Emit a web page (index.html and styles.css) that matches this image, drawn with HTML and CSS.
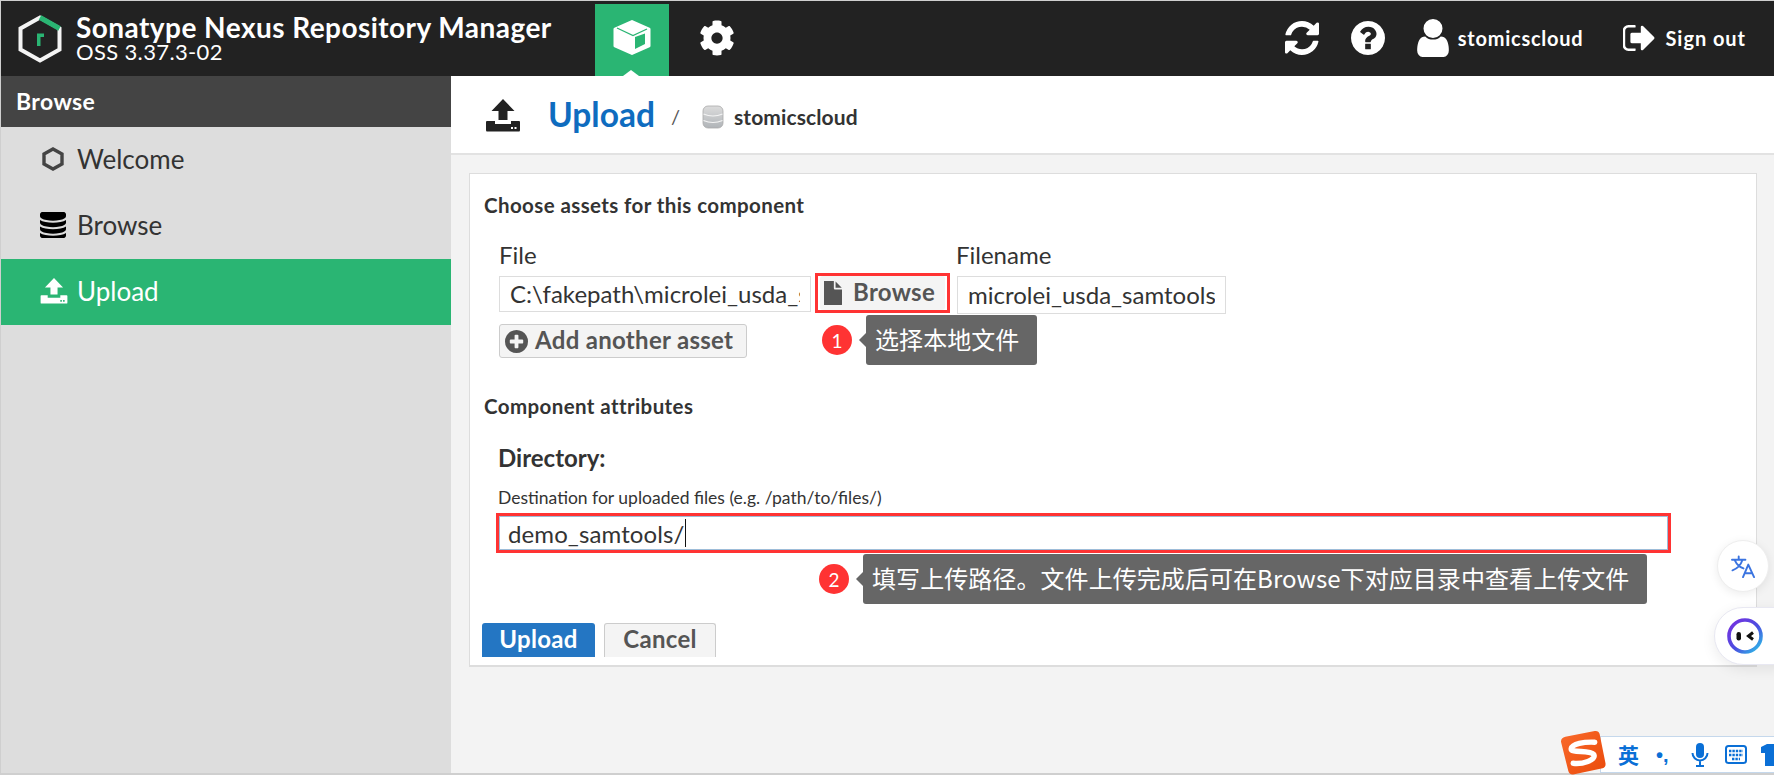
FILE: index.html
```html
<!DOCTYPE html>
<html lang="en">
<head>
<meta charset="utf-8">
<title>Sonatype Nexus Repository Manager</title>
<link rel="stylesheet" href="styles.css">
</head>
<body>
<div class="app">
  <header class="topbar">
    <div class="brand">
      <svg class="logo" viewBox="0 0 44 48"><path d="M22 2.500 L41.500 13.500 V34.500 L22 45.500 L2.500 34.500 V13.500 Z" fill="none" stroke="#f4f4f4" stroke-width="4"/><path d="M22 2.500 L41.500 13.500" fill="none" stroke="#2ab573" stroke-width="5"/><path d="M19 31 V18.500 H26 V22 H22.500 V31 Z" fill="#2ab573"/></svg>
      <div class="brand-text">
        <div class="brand-name">Sonatype Nexus Repository Manager</div>
        <div class="brand-version">OSS 3.37.3-02</div>
      </div>
    </div>
    <nav class="modes">
      <div class="mode mode-active">
        <svg class="cube" viewBox="0 0 38 35"><path d="M19 1.500 L36 9 V26 L19 33.500 L2 26 V9 Z" fill="#fff" stroke="#fff" stroke-width="3" stroke-linejoin="round"/><path d="M4 8 L20 15.500 L34 9" fill="none" stroke="#2ab573" stroke-width="1.300"/><path d="M22 17 L32 13.500 V24 L22 29 Z" fill="#2ab573"/></svg>
      </div>
      <div class="mode">
        <svg class="gear" viewBox="0 0 512 512"><path fill="#fff" d="M487.400 315.700l-42.600-24.600c4.300-23.200 4.300-47 0-70.200l42.600-24.600c4.900-2.800 7.100-8.600 5.500-14-11.100-35.600-30-67.800-54.700-94.600-3.800-4.100-10-5.100-14.800-2.300L380.800 110c-17.900-15.400-38.500-27.300-60.800-35.100V25.800c0-5.600-3.900-10.500-9.400-11.700-36.700-8.200-74.300-7.800-109.200 0-5.500 1.200-9.400 6.100-9.400 11.700V75c-22.200 7.900-42.800 19.800-60.800 35.100L88.700 85.500c-4.900-2.800-11-1.900-14.800 2.300-24.700 26.700-43.600 58.900-54.700 94.600-1.700 5.400.6 11.200 5.500 14L67.300 221c-4.300 23.200-4.300 47 0 70.200l-42.600 24.600c-4.900 2.800-7.100 8.600-5.500 14 11.100 35.600 30 67.800 54.700 94.600 3.800 4.100 10 5.100 14.800 2.300l42.600-24.600c17.900 15.400 38.500 27.300 60.800 35.100v49.200c0 5.600 3.900 10.500 9.400 11.700 36.700 8.200 74.300 7.800 109.200 0 5.500-1.200 9.400-6.100 9.400-11.700v-49.200c22.200-7.900 42.800-19.800 60.800-35.100l42.600 24.600c4.900 2.800 11 1.900 14.800-2.300 24.700-26.700 43.600-58.900 54.700-94.600 1.500-5.500-.7-11.300-5.600-14.100zM256 336c-44.100 0-80-35.900-80-80s35.900-80 80-80 80 35.900 80 80-35.900 80-80 80z"/></svg>
      </div>
    </nav>
    <div class="actions">
      <svg class="act-icon refresh" viewBox="128 128 1536 1536"><path fill="#fff" d="M1639 1056q0 5-1 7-64 268-268 434.500t-478 166.500q-146 0-282.500-55t-243.500-157l-129 129q-19 19-45 19t-45-19-19-45v-448q0-26 19-45t45-19h448q26 0 45 19t19 45-19 45l-137 137q71 66 161 102t187 36q134 0 250-65t186-179q11-17 53-117 8-23 30-23h192q13 0 22.500 9.500t9.500 22.500zm25-800v448q0 26-19 45t-45 19h-448q-26 0-45-19t-19-45 19-45l138-138q-148-137-349-137-134 0-250 65t-186 179q-11 17-53 117-8 23-30 23h-199q-13 0-22.500-9.500t-9.500-22.500v-7q65-268 270-434.500t480-166.500q146 0 284 55.500t245 156.500l130-129q19-19 45-19t45 19 19 45z"/></svg>
      <svg class="act-icon help" viewBox="128 128 1536 1536"><path fill="#fff" d="M1024 1376v-192q0-14-9-23t-23-9h-192q-14 0-23 9t-9 23v192q0 14 9 23t23 9h192q14 0 23-9t9-23zm256-672q0-88-55.500-163t-138.500-116-170-41q-243 0-371 213-15 24 8 42l132 100q7 6 19 6 16 0 25-12 53-68 86-92 34-24 86-24 48 0 85.500 26t37.500 59q0 38-20 61t-68 45q-63 28-115.500 86.500t-52.500 125.500v36q0 14 9 23t23 9h192q14 0 23-9t9-23q0-19 21.500-49.500t54.500-49.500q32-18 49-28.500t46-35 44.500-48 28-60.500 12.500-81zm384 192q0 209-103 385.500t-279.500 279.500-385.500 103-385.500-103-279.500-279.500-103-385.500 103-385.500 279.500-279.500 385.500-103 385.500 103 279.500 279.500 103 385.500z"/></svg>
      <div class="user">
        <svg class="user-icon" viewBox="256 128 1280 1536"><path fill="#fff" d="M1536 1399q0 109-62.500 187t-150.500 78h-854q-88 0-150.500-78t-62.500-187q0-85 8.500-160.500t31.500-152 58.500-131 94-89 134.500-34.500q131 128 313 128t313-128q76 0 134.500 34.500t94 89 58.500 131 31.500 152 8.500 160.500zm-256-887q0 159-112.500 271.500t-271.500 112.500-271.500-112.500-112.500-271.500 112.500-271.500 271.500-112.500 271.500 112.500 112.500 271.500z"/></svg>
        <span class="act-label">stomicscloud</span>
      </div>
      <div class="signout">
        <svg class="signout-icon" viewBox="128 256 1536 1280"><path fill="#fff" d="M704 1440q0 4 1 20t.500 26.500-3 23.500-10 19.500-20.500 6.500h-320q-119 0-203.500-84.500t-84.500-203.500v-704q0-119 84.500-203.500t203.500-84.500h320q13 0 22.500 9.500t9.500 22.500q0 4 1 20t.500 26.500-3 23.500-10 19.500-20.500 6.500h-320q-66 0-113 47t-47 113v704q0 66 47 113t113 47h312l11.500 1 11.500 3 8 5.500 7 9 2 13.500zm928-544q0 26-19 45l-544 544q-19 19-45 19t-45-19-19-45v-288h-448q-26 0-45-19t-19-45v-384q0-26 19-45t45-19h448v-288q0-26 19-45t45-19 45 19l544 544q19 19 19 45z"/></svg>
        <span class="act-label">Sign out</span>
      </div>
    </div>
  </header>
  <div class="main">
    <aside class="sidebar">
      <div class="side-head">Browse</div>
      <div class="side-item">
        <svg class="side-icon" viewBox="0 0 26 26"><path d="M13 3 L22 8 V18 L13 23 L4 18 V8 Z" fill="none" stroke="#444" stroke-width="3.400"/></svg>
        <span>Welcome</span>
      </div>
      <div class="side-item">
        <svg class="side-icon" viewBox="224 128 1344 1536"><path fill="#000" d="M896 768q237 0 443-43t325-127v170q0 69-103 128t-280 93.500-385 34.500-385-34.500-280-93.500-103-128v-170q119 84 325 127t443 43zm0 768q237 0 443-43t325-127v170q0 69-103 128t-280 93.500-385 34.500-385-34.500-280-93.500-103-128v-170q119 84 325 127t443 43zm0-384q237 0 443-43t325-127v170q0 69-103 128t-280 93.500-385 34.500-385-34.500-280-93.500-103-128v-170q119 84 325 127t443 43zm0-1152q208 0 385 34.500t280 93.500 103 128v128q0 69-103 128t-280 93.500-385 34.500-385-34.500-280-93.500-103-128v-128q0-69 103-128t280-93.500 385-34.500z"/></svg>
        <span>Browse</span>
      </div>
      <div class="side-item side-active">
        <svg class="side-icon side-upload" viewBox="0 0 34 33"><path fill="#fff" d="M17 0 L28.500 12 H21.500 V21 H12.500 V12 H5.500 Z M0 23 Q0 22 1 22 H9 V25 H25 V22 H33 Q34 22 34 23 V31 Q34 32.500 33 32.500 H1 Q0 32.500 0 31 Z"/><path fill="#2ab573" d="M25 28 h2 v2 h-2 Z M28.500 28 h2 v2 h-2 Z"/></svg>
        <span>Upload</span>
      </div>
    </aside>
    <main class="content">
      <div class="crumbs">
        <svg class="crumb-upload" viewBox="0 0 34 33"><path fill="#222" d="M17 0 L28.500 12 H21.500 V21 H12.500 V12 H5.500 Z M0 23 Q0 22 1 22 H9 V25 H25 V22 H33 Q34 22 34 23 V31 Q34 32.500 33 32.500 H1 Q0 32.500 0 31 Z"/><path fill="#fff" d="M25 28 h2 v2 h-2 Z M28.500 28 h2 v2 h-2 Z"/></svg>
        <span class="crumb-title">Upload</span>
        <span class="crumb-sep">/</span>
        <svg class="crumb-db" viewBox="0 0 22 24"><defs><linearGradient id="dbg" x1="0" x2="0" y1="0" y2="1"><stop offset="0" stop-color="#dcdcdc"/><stop offset="1" stop-color="#b0b4b8"/></linearGradient></defs><rect x="1" y="1" width="20" height="22" rx="5" fill="url(#dbg)" stroke="#aaa" stroke-width=".8"/><path d="M1.500 9 Q11 13 20.500 9 M1.500 15.500 Q11 19.500 20.500 15.500" fill="none" stroke="#f4f4f4" stroke-width="1.200"/></svg>
        <span class="crumb-repo">stomicscloud</span>
      </div>
      <div class="panel">
        <h3 class="section">Choose assets for this component</h3>
        <div class="asset-row">
          <div class="field file-field">
            <label class="lbl">File</label>
            <div class="input file-input"><span class="clip">C:\fakepath\microlei_usda_sa</span></div>
          </div>
          <div class="browse-wrap">
            <div class="btn browse-btn">
              <svg class="btn-icon file-icon" viewBox="256 0 1280 1792"><path fill="#555" d="M1152 512v-472q22 14 36 28l408 408q14 14 28 36h-472zm-128 32q0 40 28 68t68 28h544v1056q0 40-28 68t-68 28h-1344q-40 0-68-28t-28-68v-1600q0-40 28-68t68-28h800v544z" transform="translate(-64 0)"/></svg>
              <span>Browse</span>
            </div>
          </div>
          <div class="field name-field">
            <label class="lbl">Filename</label>
            <div class="input name-input"><span class="clip">microlei_usda_samtools</span></div>
          </div>
        </div>
        <div class="btn add-btn">
          <svg class="btn-icon plus-icon" viewBox="128 128 1536 1536"><path fill="#555" d="M1344 960v-128q0-26-19-45t-45-19h-256v-256q0-26-19-45t-45-19h-128q-26 0-45 19t-19 45v256h-256q-26 0-45 19t-19 45v128q0 26 19 45t45 19h256v256q0 26 19 45t45 19h128q26 0 45-19t19-45v-256h256q26 0 45-19t19-45zm320-64q0 209-103 385.500t-279.500 279.500-385.500 103-385.500-103-279.500-279.500-103-385.500 103-385.500 279.500-279.500 385.500-103 385.500 103 279.500 279.500 103 385.500z"/></svg>
          <span>Add another asset</span>
        </div>
        <h3 class="section section-2">Component attributes</h3>
        <div class="dir-title">Directory:</div>
        <div class="dir-help">Destination for uploaded files (e.g. /path/to/files/)</div>
        <div class="dir-input"><span class="dir-value">demo_samtools/</span><i class="text-caret"></i></div>
        <div class="form-actions">
          <div class="btn primary">Upload</div>
          <div class="btn cancel">Cancel</div>
        </div>
        <div class="note note-1"><b class="num">1</b><i class="tip-arrow"></i><span class="tip">选择本地文件</span></div>
        <div class="note note-2"><b class="num">2</b><i class="tip-arrow"></i><span class="tip">填写上传路径。文件上传完成后可在Browse下对应目录中查看上传文件</span></div>
      </div>
    </main>
  </div>
</div>
<div class="float-translate">
  <svg viewBox="0 0 26 24" class="float-t-icon"><g fill="none" stroke="#3b74e0" stroke-width="2" stroke-linecap="round" stroke-linejoin="round"><path d="M1 5 H15 M8 1.500 V5 M12 5 C10 11 6 14.500 1.500 16 M4 5.500 C6 10 9 12.500 13 14"/><path d="M12.500 23 L18 10 L24 23 M14.500 19 H22"/></g></svg>
</div>
<div class="float-assist">
  <svg viewBox="0 0 36 36" class="float-a-icon"><defs><linearGradient id="ring" x1="0" y1="0" x2="1" y2="1"><stop offset="0" stop-color="#7a2ee0"/><stop offset=".55" stop-color="#4a4fe0"/><stop offset="1" stop-color="#29c8e8"/></linearGradient></defs><circle cx="18" cy="18" r="16" fill="#fff" stroke="url(#ring)" stroke-width="3.600"/><rect x="9.500" y="14" width="4.500" height="8.500" rx="2.200" fill="#111"/><path d="M26 14.500 L21.500 18 L26 21.500" fill="none" stroke="#111" stroke-width="3"/></svg>
</div>
<div class="ime">
  <svg class="ime-logo" viewBox="0 0 46 46"><defs><linearGradient id="sg" x1="0" y1="0" x2="1" y2="1"><stop offset="0" stop-color="#f96a2c"/><stop offset="1" stop-color="#ea4a0a"/></linearGradient></defs><path d="M5 7 L35 1 Q39 0.500 40 4 L46 34 Q46.500 38 43 39 L13 45.500 Q9 46 8 42 L0.500 12 Q0.500 8 5 7 Z" fill="url(#sg)"/><path d="M35 12.500 C24 12 12 14 11 19 C10 24 30 20 34 25 C37 31 22 35 13 34" fill="none" stroke="#fff" stroke-width="5.500" stroke-linecap="round"/></svg>
  <div class="ime-bar">
    <span class="ime-lang">英</span>
    <span class="ime-punct">•,</span>
    <svg class="ime-mic" viewBox="0 0 18 24"><rect x="5" y="0" width="8" height="15" rx="4" fill="#0a6fd6"/><path d="M1.500 10 A7.500 7.500 0 0 0 16.500 10 M9 18 V23 M5 23 H13" fill="none" stroke="#0a6fd6" stroke-width="2"/></svg>
    <svg class="ime-kbd" viewBox="0 0 22 19"><rect x="1" y="1" width="20" height="17" rx="2.500" fill="#fff" stroke="#0a6fd6" stroke-width="2"/><path d="M4 6 H18 M4 10 H18 M7 14 H15" stroke="#0a6fd6" stroke-width="2.400" stroke-dasharray="2.400 1"/></svg>
    <svg class="ime-shirt" viewBox="0 0 20 22"><path d="M0 3 L6 0 H14 L20 3 V9 H16 V22 H4 V9 H0 Z" fill="#0a6fd6"/></svg>
  </div>
</div>
</body>
</html>
```
FILE: styles.css
```css
* { box-sizing: border-box; }
html, body { margin: 0; height: 775px; overflow: hidden; }
body {
  background: #cfcfcf;
  padding: 1px 0 2px 1px;
  font-family: Lato, "Noto Sans CJK SC", sans-serif;
  color: #333;
  position: relative;
}
.app { display: flex; flex-direction: column; height: 772px; }
.topbar { height: 75px; background: #222; display: flex; flex: none; color: #fff; }
.brand { display: flex; width: 594px; padding: 14px 0 0 17px; }
.logo { width: 44px; height: 48px; flex: none; }
.brand-text { margin-left: 14px; margin-top: -3px; }
.brand-name { font-size: 28px; font-weight: 700; line-height: 30px; white-space: nowrap; letter-spacing: .45px; }
.brand-version { font-size: 22px; line-height: 20px; letter-spacing: .35px; white-space: nowrap; }
.modes { display: flex; margin-top: 3px; }
.mode { width: 74px; height: 72px; display: flex; justify-content: center; padding-top: 16px; position: relative; }
.mode-active { background: #2ab573; }
.mode-active::after { content: ""; position: absolute; left: 28px; bottom: 0; border: 8px solid transparent; border-top: 0; border-bottom: 6px solid #fff; }
.cube { width: 38px; height: 35px; }
.gear { width: 36px; height: 36px; }
.mode + .mode { margin-left: 11px; }
.actions { margin-left: auto; display: flex; align-items: center; padding: 0 28px 2px 0; }
.act-icon { width: 34px; height: 34px; flex: none; }
.help { margin-left: 32px; }
.user { display: flex; align-items: center; margin-left: 32px; }
.user-icon { width: 32px; height: 38px; }
.act-label { font-size: 20px; font-weight: 700; white-space: nowrap; letter-spacing: .75px; }
.user .act-label { margin-left: 9px; }
.signout { display: flex; align-items: center; margin-left: 40px; }
.signout .act-label { letter-spacing: .95px; }
.signout-icon { width: 33px; height: 26px; margin-right: 9px; }
.main { display: flex; flex: 1; min-height: 0; }
.sidebar { width: 450px; background: #ddd; flex: none; }
.side-head { height: 51px; background: #444; color: #fff; font-size: 23px; font-weight: 700; line-height: 51px; padding-left: 15px; letter-spacing: .4px; }
.side-item { height: 66px; display: flex; align-items: center; padding: 0 0 2px 39px; font-size: 26px; color: #333; }
.side-active { background: #2ab573; color: #fff; }
.side-icon { width: 26px; height: 26px; margin-right: 11px; flex: none; }
.side-upload { width: 28px; margin-right: 9px; }
.content { flex: 1; min-width: 0; background: #f3f3f3; display: flex; flex-direction: column; }
.crumbs { height: 79px; background: #fff; border-bottom: 2px solid #e2e2e2; display: flex; align-items: center; padding: 0 0 2px 35px; flex: none; }
.crumb-upload { width: 34px; height: 33px; margin-top: 3px; }
.crumb-title { font-size: 33.500px; font-weight: 700; color: #0f6cbf; margin-left: 28px; }
.crumb-sep { font-size: 20px; color: #555; margin: 5px 0 0 16px; }
.crumb-db { width: 22px; height: 24px; margin: 6px 0 0 22px; }
.crumb-repo { font-size: 21px; font-weight: 700; margin: 6px 0 0 10px; letter-spacing: .1px; }
.panel { position: relative; background: #fff; border: 1px solid #ddd; border-bottom-width: 2px; width: 1288px; height: 494px; margin: 18px 0 0 18px; padding: 19px 14px 0 14px; }
.section { margin: 0; font-size: 20.500px; font-weight: 700; line-height: 24px; color: #333; letter-spacing: .4px; }
.asset-row { display: flex; margin: 25px 0 0 15px; align-items: flex-start; }
.field { display: flex; flex-direction: column; }
.lbl { font-size: 24px; line-height: 26px; height: 34px; color: #333; }
.name-field .lbl { margin-left: -1px; }
.input { height: 36px; border: 1px solid #ddd; background: #fff; font-size: 24px; line-height: 34px; padding: 0 10px; }
.clip { display: block; overflow: hidden; white-space: nowrap; color: #333; }
.file-input { width: 312px; }
.name-input { width: 269px; height: 38px; line-height: 36px; }
.browse-wrap { margin: 31px 7px 0 4px; border: 3px solid #f33; width: 135px; height: 40px; padding: 0 2px; }
.btn { display: flex; align-items: center; justify-content: center; font-weight: 700; font-size: 24px; color: #555; background: #f4f4f4; border: 1px solid #ccc; border-radius: 3px; letter-spacing: .3px; white-space: nowrap; }
.btn span { padding-bottom: 3px; }
.browse-btn { height: 34px; border: 0; justify-content: flex-start; padding-left: 4px; }
.btn-icon { flex: none; }
.file-icon { width: 18px; height: 24px; margin-right: 11px; }
.add-btn { width: 248px; height: 34px; margin: 10px 0 0 15px; justify-content: flex-start; padding-left: 5px; }
.add-btn span { padding-bottom: 4px; }
.plus-icon { width: 23px; height: 23px; margin-right: 7px; }
.section-2 { margin-top: 36px; }
.dir-title { font-size: 24px; font-weight: 700; margin: 26px 0 0 14px; line-height: 28px; color: #333; }
.dir-help { font-size: 17.500px; margin: 16px 0 0 14px; line-height: 20px; color: #333; white-space: nowrap; }
.dir-input { display: flex; align-items: center; margin: 5px 0 0 12px; width: 1175px; height: 40px; border: 3px solid #f33; box-shadow: inset 0 0 0 1px #9dbcd8; padding-left: 9px; font-size: 24px; }
.dir-value { white-space: nowrap; letter-spacing: .1px; }
.text-caret { width: 1px; height: 28px; background: #111; margin-left: 1px; }
.form-actions { display: flex; margin: 70px 0 0 -2px; gap: 9px; align-items: flex-start; }
.primary { width: 113px; height: 34px; background: #2476c3; border: 0; color: #fff; border-radius: 3px 3px 0 0; padding-bottom: 3px; }
.cancel { width: 112px; height: 34px; border-bottom: 0; border-radius: 3px 3px 0 0; padding-bottom: 4px; }
.note { position: absolute; display: flex; align-items: center; height: 50px; font-size: 24px; }
.note-1 { left: 352px; top: 141px; }
.note-2 { left: 349px; top: 380px; }
.num { width: 30px; height: 30px; border-radius: 50%; background: #f33; color: #fff; font-weight: 400; font-size: 19px; display: flex; align-items: center; justify-content: center; }
.tip-arrow { border: 7px solid transparent; border-left: 0; border-right-color: #666; margin-left: 7px; }
.tip { background: #666; color: #fff; height: 50px; line-height: 48px; padding: 0 18px 0 9px; border-radius: 3px; white-space: nowrap; font-family: "Noto Sans CJK SC", sans-serif; font-weight: 400; letter-spacing: .07px; }
.float-translate { position: absolute; left: 1717px; top: 540px; width: 52px; height: 52px; border-radius: 50%; background: #fff; border: 1px solid #eee; box-shadow: 0 2px 10px rgba(0,0,0,.08); display: flex; align-items: center; justify-content: center; }
.float-t-icon { width: 25px; height: 23px; }
.float-assist { position: absolute; left: 1714px; top: 607px; width: 70px; height: 58px; border-radius: 29px 0 0 29px; background: #fff; border: 1px solid #e8e8f2; box-shadow: 0 4px 14px rgba(0,0,0,.08); padding: 10px 0 0 12px; }
.float-a-icon { width: 36px; height: 36px; display: block; }
.ime { position: absolute; left: 1560px; top: 730px; width: 214px; height: 45px; }
.ime-logo { position: absolute; left: 0; top: 0; z-index: 1; width: 46px; height: 45px; }
.ime-bar { position: absolute; left: 40px; top: 6px; right: 0; height: 37px; background: #fff; border: 1px solid #c5d8ec; border-right: 0; display: flex; align-items: center; padding-left: 17px; color: #0a6fd6; overflow: hidden; }
.ime-lang { font: 700 21px/1 "Noto Sans CJK SC", sans-serif; width: 22px; flex: none; }
.ime-punct { font: 700 20px/1 "Liberation Sans", sans-serif; margin-left: 16px; width: 20px; flex: none; }
.ime-mic { width: 18px; height: 24px; margin-left: 15px; flex: none; }
.ime-kbd { width: 22px; height: 19px; margin-left: 16px; flex: none; }
.ime-shirt { width: 20px; height: 22px; margin-left: 14px; flex: none; }
```
